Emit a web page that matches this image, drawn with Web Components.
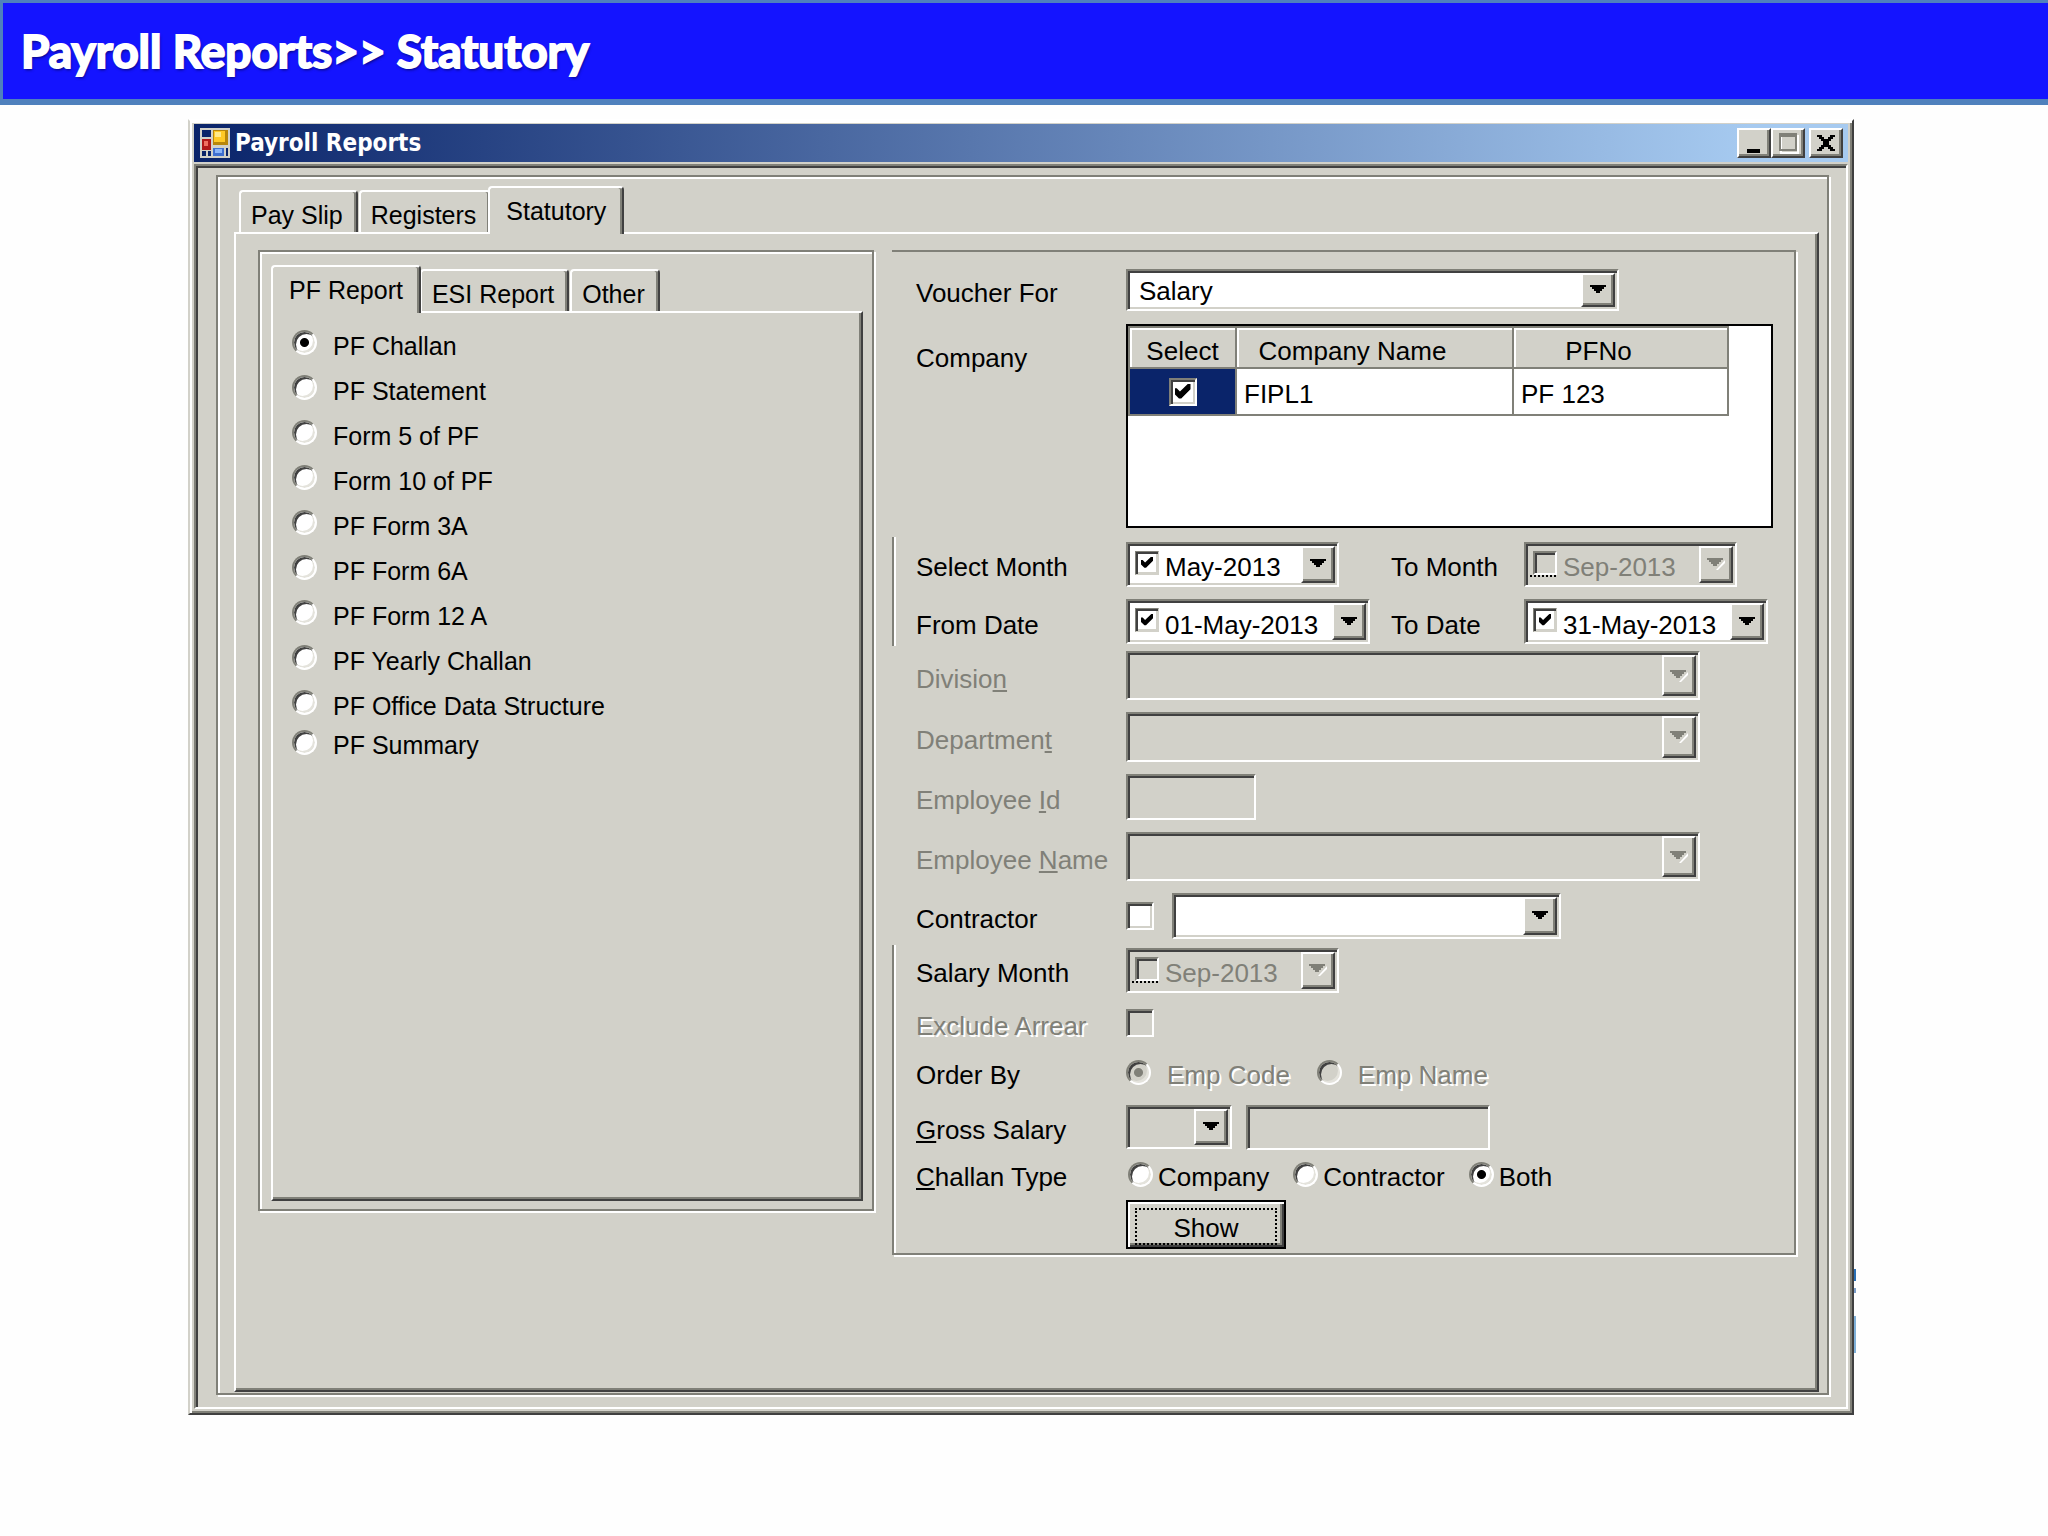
<!DOCTYPE html>
<html lang="en">
<head>
<meta charset="utf-8">
<title>Payroll Reports</title>
<style>
    :root {
        --face: #d2d1c9;
        --shadow: #808078;
        --dark: #404040;
        --navy: #0a246a;
    }
    body {
        margin: 0;
        background: #fefefe;
        color: #000;
        font-family: "Liberation Sans", Arial, sans-serif;
        font-size: 26px;
        line-height: 30px;
    }
</style>
</head>
<body>
<page-banner>Payroll Reports&gt;&gt; Statutory</page-banner>
<app-window caption="Payroll Reports">
    <tab-view tabs="Pay Slip,Registers,Statutory" active="2">
        <report-columns>
            <tab-view class="reports" tabs="PF Report,ESI Report,Other" active="0">
                <report-list></report-list>
            </tab-view>
            <report-filter></report-filter>
        </report-columns>
    </tab-view>
</app-window>

<script>
// Bevelled controls shared by the elements below
const controlStyles = `
    * { box-sizing: border-box; }
    input, select, button {
        font: inherit;
        color: inherit;
        margin: 0;
        padding: 0;
        border: 0;
        border-radius: 0;
        outline: 0;
        appearance: none;
        background: none;
        opacity: 1;
    }
    input[type=radio] {
        flex: none;
        width: 25px;
        height: 25px;
        border: 2px solid;
        border-color: #808078 #fff #fff #808078;
        border-radius: 50%;
        background: #fff;
        box-shadow: inset 2px 2px #404040, inset -2px -2px #e4e3dc;
    }
    input[type=radio]:checked {
        background: radial-gradient(circle, #000 4px, #fff 5px);
    }
    input[type=radio]:disabled { background: var(--face); }
    input[type=radio]:disabled:checked {
        background: radial-gradient(circle, #808078 4px, #d2d1c9 5px);
    }
    input[type=checkbox] {
        flex: none;
        display: grid;
        place-items: center;
        width: 28px;
        height: 28px;
        border: 2px solid;
        border-color: #808078 #fff #fff #808078;
        background: #fff;
        box-shadow: inset 2px 2px #404040, inset -2px -2px #d2d1c9;
    }
    input[type=checkbox]:disabled {
        background: var(--face);
    }
    input[type=checkbox]:checked::before {
        content: "";
        width: 16px;
        height: 16px;
        background: #000;
        clip-path: polygon(0 30%, 14% 30%, 34% 50%, 86% 0, 100% 0, 100% 36%, 42% 94%, 28% 94%, 0 66%);
    }
    .sunken {
        border: 2px solid;
        border-color: #808078 #fff #fff #808078;
        background: #fff;
        box-shadow: inset 2px 2px #404040, inset -2px -2px #d2d1c9;
    }
    .off { background: var(--face); color: #808078; }
    .raised {
        background: var(--face);
        border: 2px solid;
        border-color: #fff #404040 #404040 #fff;
        box-shadow: inset -2px -2px #808078;
    }
    .combo, .date {
        display: flex;
        align-items: stretch;
        padding: 2px;
    }
    .combo select {
        flex: 1;
        min-width: 0;
        padding: 2px 0 0 9px;
    }
    .arrow {
        flex: none;
        display: grid;
        place-items: center;
        width: 34px;
    }
    .arrow svg { display: block; }
`;

const arrow = (disabled) => disabled
    ? `<svg width="18" height="12"><path d="M18 2v3l-7 7H9z" fill="#fff"/><path d="M0 0h16v2h-2v2h-2v2h-2v2H6V6H4V4H2V2H0z" fill="#808078"/></svg>`
    : `<svg width="16" height="10"><path d="M0 0h16v2h-2v2h-2v2h-2v2H6V6H4V4H2V2H0z"/></svg>`;

class PageBanner extends HTMLElement {
    constructor() {
        super();
        this.attachShadow({ mode: "open" });
        this.shadowRoot.innerHTML = `
            <style>
                :host {
                    display: block;
                    border: 3px solid #4f81bd;
                    border-right-width: 0;
                    border-bottom-width: 6px;
                    background: #1414ff;
                }
                h1 {
                    margin: 0;
                    padding: 18px;
                    color: #fff;
                    font: bold 46px/60px Lato, Carlito, sans-serif;
                    -webkit-text-stroke: 2px #fff;
                    text-shadow: 1px 2px 3px rgba(0, 0, 60, .7);
                }
            </style>
            <h1><slot></slot></h1>
        `;
    }
}

class AppWindow extends HTMLElement {
    constructor() {
        super();
        this.attachShadow({ mode: "open" });
        this.shadowRoot.innerHTML = `
            <style>
                ${controlStyles}
                :host {
                    display: block;
                    position: relative;
                    margin: 14px 194px 40px 188px;
                    padding: 3px 4px 4px;
                    background: var(--face);
                    border: 2px solid;
                    border-color: #fff var(--dark) var(--dark) var(--face);
                    box-shadow: inset 2px 2px #fff, inset -2px -2px var(--shadow);
                }
                /* sliver of the logo behind the window */
                :host::after {
                    content: "";
                    position: absolute;
                    right: -4px;
                    bottom: 52px;
                    width: 2px;
                    height: 92px;
                    background: linear-gradient(#2a6fb5 12px, transparent 12px 19px, #7a9cc8 19px 24px, transparent 24px 47px, #7fb0d8 47px 84px, transparent 84px);
                }
                header {
                    display: flex;
                    align-items: center;
                    height: 38px;
                    padding: 0 5px 0 6px;
                    background: linear-gradient(90deg, #0a246a, #a6caf0 94%);
                }
                h2 {
                    flex: 1;
                    margin: 0;
                    padding-left: 5px;
                    color: #fff;
                    font: bold 24px/30px "DejaVu Sans Condensed", "DejaVu Sans", sans-serif;
                }
                button {
                    display: grid;
                    place-items: center;
                    width: 34px;
                    height: 30px;
                }
                button:last-child { margin-left: 4px; }
                main {
                    margin-top: 2px;
                    padding: 9px 17px 12px 20px;
                    border: 2px solid;
                    border-color: var(--shadow) #fff #fff var(--shadow);
                    box-shadow: inset 2px 2px var(--dark);
                }
                .group {
                    padding: 9px 8px 1px 16px;
                    border: 2px solid var(--shadow);
                    box-shadow: inset 2px 2px #fff, 2px 2px #fff;
                }
            </style>
            <header>
                <svg width="30" height="30" viewBox="0 0 30 30">
                    <path fill="#d2d1c9" d="M0 0h30v30H0z"/>
                    <path fill="#0a246a" d="M2 2h9v7H2zM2 23h4v5H2zM8 23h3v5H8zM26 20h2v8h-2z"/>
                    <path fill="#b8860b" d="M13 2h15v15H13z"/>
                    <path fill="#ffc926" d="M14 3h11v11H14z"/>
                    <path fill="#ffe98a" d="M15 4h6v5h-6z"/>
                    <path fill="#b01818" d="M2 11h9v11H2z"/>
                    <path fill="#f07060" d="M4 13h4v5H4z"/>
                    <path fill="#3f6fd0" d="M13 20h11v8H13z"/>
                    <path fill="#8ab4f8" d="M15 21h7v4h-7z"/>
                </svg>
                <h2>${this.getAttribute("caption")}</h2>
                <button class="raised" aria-label="Minimize"><svg width="26" height="22"><path d="M6 17h13v4H6z"/></svg></button>
                <button class="raised" aria-label="Maximize" disabled><svg width="26" height="22"><path d="M6 4h17v17H6z" fill="none" stroke="#fff" stroke-width="2"/><path d="M4 4V1h18v18H4zM6 5v12h14V5z" fill="#808078" fill-rule="evenodd"/></svg></button>
                <button class="raised" aria-label="Close"><svg width="26" height="22"><path d="M4 3h5v2h2v2h4V5h2V3h5v2h-2v2h-2v2h-2v4h2v2h2v2h2v2h-5v-2h-2v-2h-4v2H9v2H4v-2h2v-2h2v-2h2V9H8V7H6V5H4z"/></svg></button>
            </header>
            <main><div class="group"><slot></slot></div></main>
        `;
    }
}

class TabView extends HTMLElement {
    constructor() {
        super();
        this.attachShadow({ mode: "open" });
        const active = Number(this.getAttribute("active"));
        const tabs = this.getAttribute("tabs").split(",").map((name, index) =>
            `<button role="tab" aria-selected="${index === active}">${name}</button>`).join("");

        this.shadowRoot.innerHTML = `
            <style>
                ${controlStyles}
                :host {
                    display: flex;
                    flex-direction: column;
                }
                :host(.reports) {
                    margin: 0 2px 46px 0;
                    padding: 12px 9px 8px 11px;
                    border: 2px solid var(--shadow);
                    box-shadow: inset 2px 2px #fff, 2px 2px #fff;
                }
                nav {
                    display: flex;
                    align-items: flex-end;
                    gap: 1px;
                    padding-left: 5px;
                    height: 46px;
                }
                :host(.reports) nav { padding-left: 4px; height: 47px; }
                button {
                    height: 42px;
                    padding: 5px 13px 0 10px;
                    font-size: 25px;
                    background: var(--face);
                    border: 2px solid;
                    border-color: #fff var(--dark) var(--face) #fff;
                    border-bottom: 0;
                    border-radius: 4px 4px 0 0;
                    box-shadow: inset -2px 0 var(--shadow);
                }
                button[aria-selected=true] {
                    z-index: 1;
                    height: 48px;
                    margin: 0 -2px -2px -4px;
                    padding: 0 16px;
                }
                section {
                    flex: 1;
                    border: 2px solid;
                    border-color: #fff var(--dark) var(--dark) #fff;
                    box-shadow: inset -2px -2px var(--shadow);
                }
            </style>
            <nav role="tablist">${tabs}</nav>
            <section role="tabpanel"><slot></slot></section>
        `;
    }
}

class ReportColumns extends HTMLElement {
    constructor() {
        super();
        this.attachShadow({ mode: "open" });
        this.shadowRoot.innerHTML = `
            <style>
                :host {
                    display: grid;
                    grid-template-columns: 618fr 906fr;
                    gap: 16px;
                    padding: 16px 19px 133px 22px;
                }
            </style>
            <slot></slot>
        `;
    }
}

class ReportList extends HTMLElement {
    constructor() {
        super();
        this.attachShadow({ mode: "open" });
        const reports = ["PF Challan", "PF Statement", "Form 5 of PF", "Form 10 of PF", "PF Form 3A",
            "PF Form 6A", "PF Form 12 A", "PF Yearly Challan", "PF Office Data Structure", "PF Summary"];

        this.shadowRoot.innerHTML = `
            <style>
                ${controlStyles}
                :host {
                    display: grid;
                    grid-template-rows: repeat(9, 45px) 34px;
                    padding: 7px 0 0 19px;
                    font-size: 25px;
                }
                label {
                    display: flex;
                    align-items: center;
                    gap: 16px;
                }
                span { padding-top: 6px; }
            </style>
            ${reports.map((name, index) => `
                <label><input type="radio" name="report" ${index === 0 ? "checked" : ""}><span>${name}</span></label>
            `).join("")}
        `;
    }
}

class CompanyTable extends HTMLElement {
    constructor() {
        super();
        this.attachShadow({ mode: "open" });
        this.shadowRoot.innerHTML = `
            <style>
                ${controlStyles}
                :host {
                    display: block;
                    box-sizing: border-box;
                    height: 204px;
                    border: 2px solid #000;
                    background: #fff;
                }
                table {
                    table-layout: fixed;
                    width: 599px;
                    border-collapse: collapse;
                }
                th, td {
                    padding: 0 7px;
                    border: 2px solid var(--shadow);
                    text-align: left;
                    white-space: nowrap;
                }
                th {
                    height: 41px;
                    padding: 6px 44px 0 0;
                    background: var(--face);
                    box-shadow: inset 2px 2px #fff;
                    font-weight: normal;
                    text-align: center;
                }
                th:first-child { padding-right: 0; }
                td { height: 47px; padding-top: 4px; }
                .picked { padding: 0; background: var(--navy); }
                input[type=checkbox] { margin: auto; }
            </style>
            <table>
                <colgroup><col width="107"><col width="277"><col width="215"></colgroup>
                <tr><th>Select</th><th>Company Name</th><th>PFNo</th></tr>
                <tr><td class="picked"><input type="checkbox" aria-label="Select FIPL1" checked></td><td>FIPL1</td><td>PF 123</td></tr>
            </table>
        `;
    }
}

/**
 * @param {string} id - Id of the text box, for its label
 * @param {string} value
 * @param {string} size - "month" or "day"
 * @param {boolean} disabled
 * @returns {string} HTML string of a date picker
 */
function datePicker(id, value, size, disabled) {
    const off = disabled ? "disabled" : "";
    return `<span class="sunken date ${size} ${disabled ? "off" : ""}">
        <span class="tick"><input type="checkbox" aria-label="Use ${id}" ${disabled ? "" : "checked"} ${off}></span>
        <input type="text" id="${id}" value="${value}" ${off}>
        <button class="raised arrow" aria-label="Open calendar" ${off}>${arrow(disabled)}</button>
    </span>`;
}

/**
 * @param {string} id
 * @param {string} size - Class that sets the width
 * @param {boolean} disabled
 * @param {string} text
 * @returns {string} HTML string of a drop-down
 */
function comboBox(id, size, disabled, text = "") {
    return `<span class="sunken combo ${size} ${disabled ? "off" : ""}">
        <select id="${id}" ${disabled ? "disabled" : ""}><option>${text}</option></select>
        <span class="raised arrow" aria-hidden="true">${arrow(disabled)}</span>
    </span>`;
}

class ReportFilter extends HTMLElement {
    constructor() {
        super();
        this.attachShadow({ mode: "open" });
        this.shadowRoot.innerHTML = `
            <style>
                ${controlStyles}
                :host {
                    display: block;
                    margin: 0 2px 2px 0;
                    border: 2px solid var(--shadow);
                    border-left: 0;
                    box-shadow: 2px 2px #fff;
                }
                .rows {
                    display: grid;
                    padding-left: 24px;
                }
                .edge {
                    padding-left: 20px;
                    border-left: 2px solid var(--shadow);
                    box-shadow: inset 2px 0 #fff;
                    margin-right: 2px;
                }
                .edge .row { padding-left: 2px; }
                .voucher { grid-template-rows: 42px 204px; row-gap: 13px; padding-top: 17px; padding-bottom: 9px; }
                .dates { grid-template-rows: 44px 45px; row-gap: 13px; padding-top: 5px; padding-bottom: 2px; }
                .staff { grid-template-rows: 49px 50px 46px 49px 46px; row-gap: 12px; padding-top: 5px; padding-bottom: 6px; }
                .options { grid-template-rows: 46px 48px 38px 60px 22px 58px; row-gap: 6px; padding-top: 2px; padding-bottom: 4px; }
                .row {
                    display: grid;
                    grid-template-columns: 210px 1fr;
                    grid-template-rows: minmax(0, 1fr);
                    align-items: center;
                    min-height: 0;
                }
                .options .row:last-child { align-items: end; }
                .row > label, .row > .name, .pair > label { padding-top: 6px; }
                .top { align-items: start; padding-right: 21px; }
                .top > .name { padding-top: 19px; }
                .fields {
                    display: flex;
                    align-items: center;
                    height: 100%;
                }
                .staff .combo, .staff .text { height: 100%; }
                .voucher .combo { height: 42px; }
                .pair {
                    display: grid;
                    grid-template-columns: 265px 133px auto;
                    justify-content: start;
                    align-items: center;
                }
                .date { height: 45px; }
                .month { width: 213px; }
                .day { width: 244px; }
                .date .tick { padding: 5px 0 0 5px; }
                .date input[type=checkbox] { width: 24px; height: 24px; border-width: 1px; }
                .date input[type=checkbox]:checked { border-color: #808078 #d2d1c9 #d2d1c9 #808078; }
                .date input[type=checkbox]::before { width: 12px; height: 12px; }
                .date input[type=checkbox]:disabled { border-width: 2px; }
                .date.off .tick { height: 36px; background: linear-gradient(90deg, #000 50%, transparent 50%) 6px 29px / 4px 2px repeat-x; }
                .date input[type=text] {
                    flex: 1;
                    min-width: 0;
                    padding: 6px 0 0 6px;
                }
                .w493 { width: 493px; }
                .w574 { width: 574px; }
                .w389 { width: 389px; margin-left: 18px; }
                .w106 { width: 106px; height: 44px; }
                .text { width: 130px; height: 45px; }
                .amount { width: 244px; margin-left: 14px; }
                .gray { color: #808078; }
                .etched { color: #808078; text-shadow: 2px 2px #fff; }
                .choice {
                    display: flex;
                    align-items: center;
                    gap: 5px;
                    margin-right: 24px;
                }
                .choice span { padding-top: 6px; }
                .types { padding-left: 2px; }
                .order .choice { gap: 16px; margin-right: 27px; }
                .show {
                    width: 160px;
                    height: 49px;
                    padding: 4px;
                    background: var(--face);
                    border: 2px solid #000;
                    box-shadow: inset 2px 2px #fff, inset -2px -2px #404040, inset -4px -4px #808078;
                }
                .show span {
                    display: block;
                    margin: 2px 3px;
                    border: 2px dotted #000;
                    padding-top: 3px;
                }
            </style>
            <div class="rows voucher">
                <div class="row">
                    <label for="voucher">Voucher For</label>
                    ${comboBox("voucher", "w493", false, "Salary")}
                </div>
                <div class="row top">
                    <span class="name">Company</span>
                    <company-table></company-table>
                </div>
            </div>
            <div class="rows edge dates">
                <div class="row">
                    <label for="select-month">Select Month</label>
                    <div class="pair">
                        ${datePicker("select-month", "May-2013", "month", false)}
                        <label for="to-month">To Month</label>
                        ${datePicker("to-month", "Sep-2013", "month", true)}
                    </div>
                </div>
                <div class="row">
                    <label for="from-date">From Date</label>
                    <div class="pair">
                        ${datePicker("from-date", "01-May-2013", "day", false)}
                        <label for="to-date">To Date</label>
                        ${datePicker("to-date", "31-May-2013", "day", false)}
                    </div>
                </div>
            </div>
            <div class="rows staff">
                <div class="row">
                    <label for="division" class="gray">Divisio<u>n</u></label>
                    ${comboBox("division", "w574", true)}
                </div>
                <div class="row">
                    <label for="department" class="gray">Departmen<u>t</u></label>
                    ${comboBox("department", "w574", true)}
                </div>
                <div class="row">
                    <label for="employee-id" class="gray">Employee <u>I</u>d</label>
                    <input type="text" id="employee-id" class="sunken off text" disabled>
                </div>
                <div class="row">
                    <label for="employee-name" class="gray">Employee <u>N</u>ame</label>
                    ${comboBox("employee-name", "w574", true)}
                </div>
                <div class="row">
                    <label for="contractor">Contractor</label>
                    <div class="fields">
                        <input type="checkbox" id="contractor">
                        ${comboBox("contractor-name", "w389", false)}
                    </div>
                </div>
            </div>
            <div class="rows edge options">
                <div class="row">
                    <label for="salary-month">Salary Month</label>
                    ${datePicker("salary-month", "Sep-2013", "month", true)}
                </div>
                <div class="row">
                    <label for="arrear" class="etched">Exclude Arrear</label>
                    <input type="checkbox" id="arrear" disabled>
                </div>
                <div class="row">
                    <span class="name">Order By</span>
                    <div class="fields order">
                        <label class="choice etched"><input type="radio" name="order" checked disabled><span>Emp Code</span></label>
                        <label class="choice etched"><input type="radio" name="order" disabled><span>Emp Name</span></label>
                    </div>
                </div>
                <div class="row">
                    <label for="gross"><u>G</u>ross Salary</label>
                    <div class="fields">
                        <span class="sunken combo off w106">
                            <select id="gross"><option></option></select>
                            <span class="raised arrow" aria-hidden="true">${arrow(false)}</span>
                        </span>
                        <input type="text" class="sunken off text amount" aria-label="Gross salary amount">
                    </div>
                </div>
                <div class="row">
                    <span class="name"><u>C</u>hallan Type</span>
                    <div class="fields types">
                        <label class="choice"><input type="radio" name="type"><span>Company</span></label>
                        <label class="choice"><input type="radio" name="type"><span>Contractor</span></label>
                        <label class="choice"><input type="radio" name="type" checked><span>Both</span></label>
                    </div>
                </div>
                <div class="row">
                    <span></span>
                    <button class="show"><span>Show</span></button>
                </div>
            </div>
        `;
    }
}

customElements.define("page-banner", PageBanner);
customElements.define("app-window", AppWindow);
customElements.define("tab-view", TabView);
customElements.define("report-columns", ReportColumns);
customElements.define("report-list", ReportList);
customElements.define("company-table", CompanyTable);
customElements.define("report-filter", ReportFilter);
</script>
</body>
</html>
